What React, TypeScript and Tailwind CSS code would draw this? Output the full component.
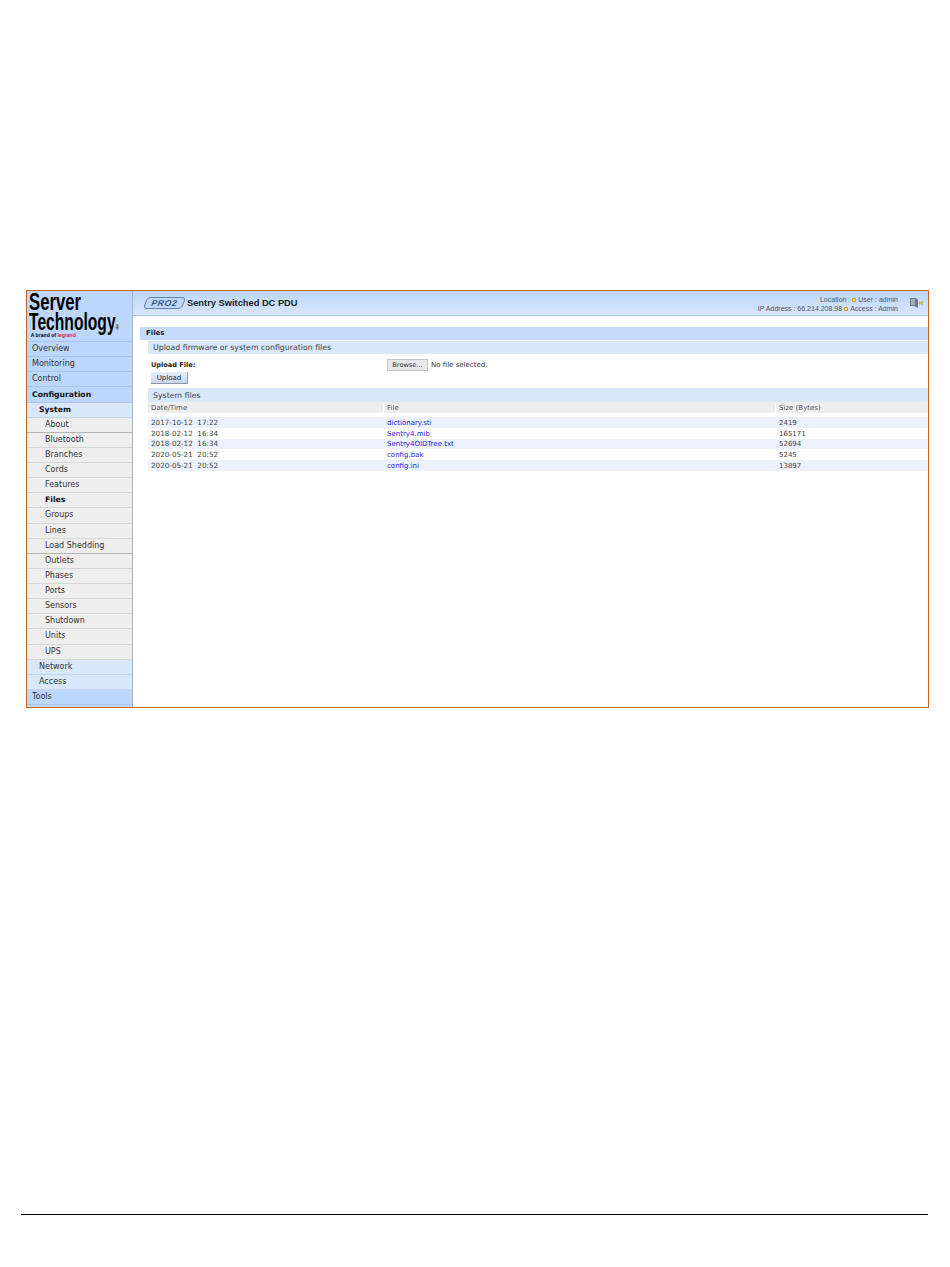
const F = { fontFamily: '"DejaVu Sans", Verdana, sans-serif' };
const A = { fontFamily: '"Liberation Sans", Arial, sans-serif' };

type Item = { label: string; level: 1 | 2 | 3; bold?: boolean; dark?: boolean };
const menu: Item[] = [
  { label: "Overview", level: 1 },
  { label: "Monitoring", level: 1 },
  { label: "Control", level: 1 },
  { label: "Configuration", level: 1, bold: true },
  { label: "System", level: 2, bold: true },
  { label: "About", level: 3, dark: true },
  { label: "Bluetooth", level: 3 },
  { label: "Branches", level: 3 },
  { label: "Cords", level: 3 },
  { label: "Features", level: 3 },
  { label: "Files", level: 3, bold: true },
  { label: "Groups", level: 3 },
  { label: "Lines", level: 3 },
  { label: "Load Shedding", level: 3, dark: true },
  { label: "Outlets", level: 3 },
  { label: "Phases", level: 3 },
  { label: "Ports", level: 3 },
  { label: "Sensors", level: 3 },
  { label: "Shutdown", level: 3 },
  { label: "Units", level: 3 },
  { label: "UPS", level: 3 },
  { label: "Network", level: 2 },
  { label: "Access", level: 2 },
  { label: "Tools", level: 1 },
];

const files = [
  ["2017-10-12  17:22", "dictionary.sti", "2419", "h-[11px] mt-[4px] bg-[#ebf2fd]"],
  ["2018-02-12  16:34", "Sentry4.mib", "165171", "h-[11px]"],
  ["2018-02-12  16:34", "Sentry4OIDTree.txt", "52694", "h-[10px] bg-[#ebf2fd]"],
  ["2020-05-21  20:52", "config.bak", "5245", "h-[11px]"],
  ["2020-05-21  20:52", "config.ini", "13897", "h-[11px] bg-[#ebf2fd]"],
];

function LevelRow({ item }: { item: Item }) {
  const cls =
    item.level === 1
      ? "pl-[5px] bg-[#bdd6fb] border-[#a9c4ea]"
      : item.level === 2
        ? "pl-[12px] bg-[#d9e7fb] border-[#c3d3e9]"
        : `pl-[18px] bg-[#eeeeee] ${item.dark ? "border-[#b4b4b4]" : "border-[#d6d6d6]"}`;
  return (
    <div
      className={`h-[15.13px] flex items-center border-b leading-none whitespace-nowrap ${cls} ${item.bold ? "font-bold text-[7.7px] text-[#111]" : "text-[8px] text-[#333]"}`}
    >
      {item.label}
    </div>
  );
}

function Square() {
  return <span className="inline-block w-[4px] h-[4px] mx-[2px] border border-[#d8a23a] bg-[#efe3ad]" />;
}

export default function App() {
  return (
    <div className="w-[950px] h-[1267px] bg-white pt-[290px] overflow-hidden" style={F}>
      <div className="ml-[26px] w-[903px] h-[418px] border border-[#c8641e] flex">
        <aside className="w-[106px] shrink-0 border-r border-[#a8b4c4] flex flex-col bg-[#bdd6fb]">
          <div className="h-[51px] shrink-0 border-b border-[#a9c4ea] pl-[2px] pt-[2px] overflow-hidden text-black" style={A}>
            <div className="h-[19px] origin-left scale-x-[0.726] text-[23px] leading-[19px] font-bold whitespace-nowrap">Server</div>
            <div className="h-[20px] origin-left scale-x-[0.68] text-[23px] leading-[20px] font-bold whitespace-nowrap">
              Technology<span className="text-[7px] font-normal leading-none">®</span>
            </div>
            <div className="h-[6px] pl-[2px] origin-left scale-x-[0.85] scale-y-[0.75] text-[6px] leading-[6px] font-bold whitespace-nowrap">
              A brand of <span className="text-[#d4261c]">legrand</span>
            </div>
          </div>
          {menu.map((m) => (
            <LevelRow key={m.label} item={m} />
          ))}
        </aside>

        <main className="flex-1 min-w-0">
          <header className="h-[25px] bg-gradient-to-b from-[#bcd6fb] to-[#d8e6fb] border-b border-[#a9c4ea] flex items-center pl-[12px] pr-[5px]">
            <div
              className="w-[39px] h-[12px] shrink-0 -skew-x-[20deg] rounded-[4px] border border-[#5f83b2] bg-[#c2d6f5] flex items-center justify-center text-[8.5px] font-bold leading-none text-[#2f5a92] tracking-[0.08em]"
              style={A}
            >
              PRO2
            </div>
            <div className="ml-[3px] pt-[1px] text-[9.3px] font-bold text-[#222] leading-none" style={A}>
              Sentry Switched DC PDU
            </div>
            <div className="ml-auto text-right text-[7px] leading-[9px] text-[#555] mr-[10px] pt-[1px]" style={A}>
              <div>
                Location :<Square />User : admin
              </div>
              <div>
                IP Address : 66.214.208.98<Square />Access : Admin
              </div>
            </div>
            <svg width="15" height="12" viewBox="0 0 15 12" className="shrink-0">
              <path d="M2 1 L8 1 L10 3 V11 L6 9 H2 Z" fill="#6f7a88" />
              <path d="M3 2 H7 L7 8 H3 Z" fill="#a3afbf" />
              <path d="M10 6 H14 M14 4 V8 M12 5 V7" stroke="#c9ad45" strokeWidth="1.2" fill="none" />
            </svg>
          </header>

          <section className="mt-[11px] ml-[7px]">
            <div className="h-[13px] bg-[#c6dbfb] pl-[6px] flex items-center text-[7px] font-bold text-[#222] leading-none">Files</div>
            <div className="ml-[8px] mt-[1px]">
              <div className="h-[13px] bg-[#d9e7fb] pl-[5px] flex items-center text-[7.8px] text-[#444] leading-none">
                Upload firmware or system configuration files
              </div>
              <div className="flex items-center h-[12px] mt-[5px] text-[7px] leading-none">
                <div className="w-[239px] pl-[3px] font-bold text-[6.6px] text-[#222]">Upload File:</div>
                <button className="w-[41px] h-[12px] bg-[#e8e8e8] border border-[#c4c4c4] text-[6.6px] text-[#333] leading-none">Browse...</button>
                <span className="ml-[3px] pt-[1px] text-[#333]">No file selected.</span>
              </div>
              <button className="ml-[3px] mt-[1px] pt-[1px] block w-[37px] h-[12px] bg-gradient-to-b from-[#e6eefb] to-[#c9d8ee] border-b border-r border-[#8c99ab] text-[7px] text-[#222] leading-none">
                Upload
              </button>
              <div className="mt-[4px] h-[14px] bg-[#d9e7fb] pl-[5px] pt-[1px] flex items-center text-[7.8px] text-[#444] leading-none">System files</div>
              <div className="flex h-[11px] pt-[1px] bg-[#eeeeee] text-[7px] text-[#555] leading-none items-center">
                <div className="w-[235px] pl-[3px]">Date/Time</div>
                <div className="w-[392px] pl-[3px] h-full flex items-center border-l border-white">File</div>
                <div className="pl-[3px] h-full flex items-center border-l border-white">Size (Bytes)</div>
              </div>
              {files.map(([d, f, s, c]) => (
                <div key={f} className={`flex items-center text-[7px] leading-none ${c}`}>
                  <div className="w-[235px] pl-[3px] text-[7.2px] text-[#444] whitespace-pre">{d}</div>
                  <div className="w-[392px] pl-[4px] pt-[1px] text-[#1a1ae0]">{f}</div>
                  <div className="pl-[4px] pt-[1px] text-[#444]">{s}</div>
                </div>
              ))}
            </div>
          </section>
        </main>
      </div>
      <div className="ml-[21px] mt-[506px] w-[907px] border-t border-black" />
    </div>
  );
}
